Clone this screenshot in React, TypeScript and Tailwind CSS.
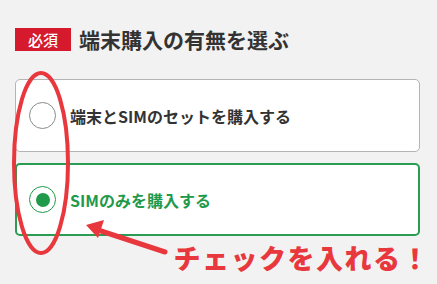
import React from 'react'

const jp = { fontFamily: '"Noto Sans CJK JP", "Noto Sans", sans-serif' }

function Radio({ checked }: { checked: boolean }) {
  return (
    <span
      className={
        'flex h-[27px] w-[27px] shrink-0 items-center justify-center rounded-full bg-white ' +
        (checked ? 'border border-[#1f9a4a]' : 'border border-[#8a8a8a]')
      }
    >
      {checked && <span className="h-[14px] w-[14px] rounded-full bg-[#1f9a4a]" />}
    </span>
  )
}

export default function App() {
  return (
    <div className="relative h-[284px] w-[437px] overflow-hidden bg-[#f2f2f2] px-[15px] pt-[28px]" style={jp}>
      <div className="flex h-[22px] items-center gap-[8px]">
        <span className="flex h-[23px] w-[56px] items-center justify-center bg-[#d51a2e] text-[15px] font-medium leading-none text-white">
          必須
        </span>
        <span className="text-[21px] font-bold leading-none text-[#333]">端末購入の有無を選ぶ</span>
      </div>

      <div className="mt-[29px] flex flex-col gap-[11px] pr-[2px]">
        <label className="flex h-[73px] items-center gap-[14px] rounded-[5px] border border-[#b4b4b4] bg-white pl-[13px]">
          <Radio checked={false} />
          <span className="text-[16px] font-bold text-[#333]">端末とSIMのセットを購入する</span>
        </label>
        <label className="flex h-[73px] items-center gap-[14px] rounded-[5px] border-2 border-[#2a9d52] bg-white pl-[12px]">
          <Radio checked={true} />
          <span className="text-[16px] font-bold text-[#1f9a4a]">SIMのみを購入する</span>
        </label>
      </div>

      <div className="-mr-[8px] mt-[7px] text-right text-[27px] font-black leading-[30px] tracking-[1.5px] text-[#e8383d]">
        チェックを入れる！
      </div>

      <svg className="pointer-events-none absolute left-0 top-0" width="437" height="284" viewBox="0 0 437 284">
        <ellipse cx="41" cy="163" rx="27" ry="90" fill="none" stroke="#e8383d" strokeWidth="4" />
        <line x1="165" y1="252" x2="98" y2="230" stroke="#e8383d" strokeWidth="5" strokeLinecap="round" />
        <polygon points="86,225 104,220 98,238" fill="#e8383d" />
      </svg>
    </div>
  )
}
